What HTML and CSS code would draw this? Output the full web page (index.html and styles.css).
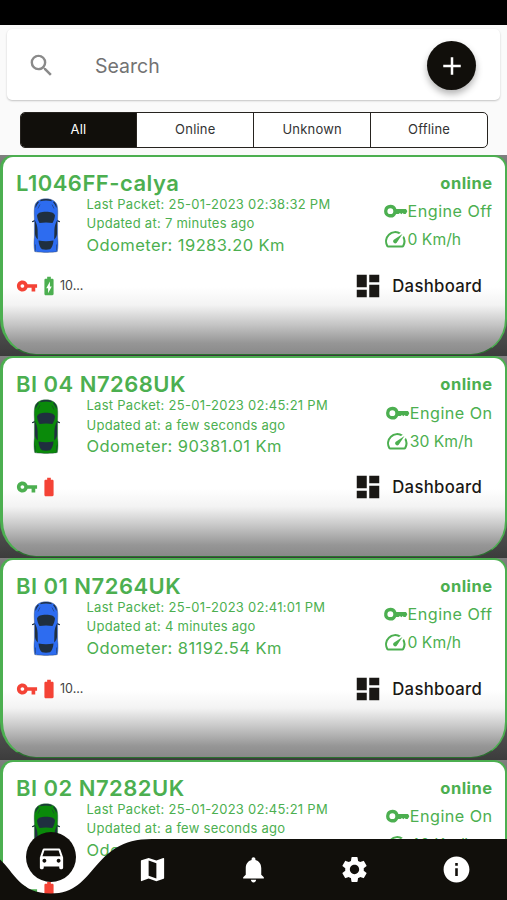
FILE: index.html
```html
<!DOCTYPE html>
<html lang="en">
<head>
    <meta charset="utf-8">
    <title>Vehicles</title>
    <link rel="stylesheet" href="styles.css">
</head>

<body>
<!-- shared icons -->
<svg class="sprite">
    <symbol id="search" viewBox="0 0 24 24">
        <path d="M15.5 14h-.79l-.28-.27A6.47 6.47 0 0 0 16 9.5 6.5 6.5 0 1 0 9.5 16c1.61 0 3.09-.59 4.23-1.57l.27.28v.79l5 4.99L20.49 19l-4.99-5zm-6 0C7.01 14 5 11.99 5 9.5S7.01 5 9.5 5 14 7.01 14 9.5 11.99 14 9.5 14z"/>
    </symbol>
    <symbol id="plus" viewBox="0 0 24 24">
        <path d="M19 13h-6v6h-2v-6H5v-2h6V5h2v6h6v2z"/>
    </symbol>
    <symbol id="key" viewBox="0 0 24 24">
        <path d="M12.65 10C11.83 7.67 9.61 6 7 6c-3.31 0-6 2.69-6 6s2.69 6 6 6c2.61 0 4.83-1.67 5.65-4H17v4h4v-4h2v-4H12.65zM7 14c-1.1 0-2-.9-2-2s.9-2 2-2 2 .9 2 2-.9 2-2 2z"/>
    </symbol>
    <symbol id="engine" viewBox="0 0 24 14">
        <path fill-rule="evenodd" d="M7.2.8a6.2 6.2 0 0 1 5.9 4h9.4L24 7l-1.800 2.700h-1.900l-1.100-.9-1.200 1.200-1.400-1.200-1.300.9h-2.400A6.2 6.2 0 1 1 7.2.8zM7.2 4.100a2.900 2.900 0 1 0 0 5.800 2.900 2.900 0 0 0 0-5.800z"/>
    </symbol>
    <symbol id="speed" viewBox="0 0 24 24">
        <path d="M20.38 8.57l-1.23 1.85a8 8 0 0 1-.22 7.58H5.07A8 8 0 0 1 15.58 6.85l1.85-1.23A10 10 0 0 0 3.35 19a2 2 0 0 0 1.72 1h13.85a2 2 0 0 0 1.74-1 10 10 0 0 0-.27-10.44zM10.59 15.41a2 2 0 0 0 2.83 0l5.66-8.49-8.49 5.66a2 2 0 0 0 0 2.83z"/>
    </symbol>
    <symbol id="battery" viewBox="0 0 24 24">
        <path d="M15.67 4H14V2h-4v2H8.33C7.6 4 7 4.6 7 5.33v15.33C7 21.4 7.6 22 8.33 22h7.33c.74 0 1.34-.6 1.34-1.33V5.33C17 4.6 16.4 4 15.67 4z"/>
    </symbol>
    <symbol id="charging" viewBox="0 0 24 24">
        <path d="M15.67 4H14V2h-4v2H8.33C7.6 4 7 4.6 7 5.33v15.33C7 21.4 7.6 22 8.33 22h7.33c.74 0 1.34-.6 1.34-1.33V5.33C17 4.6 16.4 4 15.67 4zM11 20v-5.5H9L13 7v5.5h2L11 20z"/>
    </symbol>
    <symbol id="dashboard" viewBox="0 0 24 24">
        <path d="M3 13h8V3H3v10zm0 8h8v-6H3v6zm10 0h8V11h-8v10zm0-18v6h8V3h-8z"/>
    </symbol>
    <symbol id="map" viewBox="0 0 24 24">
        <path d="M20.5 3l-.16.03L15 5.1 9 3 3.36 4.9c-.21.07-.36.25-.36.48V20.5c0 .28.22.5.5.5l.16-.03L9 18.9l6 2.1 5.64-1.9c.21-.07.36-.25.36-.48V3.5c0-.28-.22-.5-.5-.5zM15 19l-6-2.11V5l6 2.11V19z"/>
    </symbol>
    <symbol id="bell" viewBox="0 0 24 24">
        <path d="M12 22c1.1 0 2-.9 2-2h-4c0 1.1.89 2 2 2zm6-6v-5c0-3.07-1.64-5.64-4.5-6.32V4c0-.83-.67-1.5-1.5-1.5s-1.5.67-1.5 1.5v.68C7.63 5.36 6 7.92 6 11v5l-2 2v1h16v-1l-2-2z"/>
    </symbol>
    <symbol id="gear" viewBox="0 0 24 24">
        <path d="M19.14 12.94c.04-.3.06-.61.06-.94 0-.32-.02-.64-.07-.94l2.03-1.58a.49.49 0 0 0 .12-.61l-1.92-3.32a.488.488 0 0 0-.59-.22l-2.39.96c-.5-.38-1.03-.7-1.62-.94l-.36-2.54a.484.484 0 0 0-.48-.41h-3.84c-.24 0-.43.17-.47.41l-.36 2.54c-.59.24-1.13.57-1.62.94l-2.39-.96c-.22-.08-.47 0-.59.22L2.74 8.87c-.12.21-.08.47.12.61l2.03 1.58c-.05.3-.09.63-.09.94s.02.64.07.94l-2.03 1.58a.49.49 0 0 0-.12.61l1.92 3.32c.12.22.37.29.59.22l2.39-.96c.5.38 1.03.7 1.62.94l.36 2.54c.05.24.24.41.48.41h3.84c.24 0 .44-.17.47-.41l.36-2.54c.59-.24 1.13-.56 1.62-.94l2.39.96c.22.08.47 0 .59-.22l1.92-3.32c.12-.22.07-.47-.12-.61l-2.01-1.58zM12 15.6c-1.98 0-3.6-1.62-3.6-3.6s1.62-3.6 3.6-3.6 3.6 1.62 3.6 3.6-1.62 3.6-3.6 3.6z"/>
    </symbol>
    <symbol id="info" viewBox="0 0 24 24">
        <path d="M12 2C6.48 2 2 6.48 2 12s4.48 10 10 10 10-4.48 10-10S17.52 2 12 2zm1 15h-2v-6h2v6zm0-8h-2V7h2v2z"/>
    </symbol>
    <symbol id="car" viewBox="0 0 24 24">
        <path d="M18.92 6.01C18.72 5.42 18.16 5 17.5 5h-11c-.66 0-1.21.42-1.42 1.01L3 12v8c0 .55.45 1 1 1h1c.55 0 1-.45 1-1v-1h12v1c0 .55.45 1 1 1h1c.55 0 1-.45 1-1v-8l-2.08-5.99zM6.5 16c-.83 0-1.5-.67-1.5-1.5S5.67 13 6.5 13s1.5.67 1.5 1.5S7.33 16 6.5 16zm11 0c-.83 0-1.5-.67-1.5-1.5s.67-1.5 1.5-1.5 1.5.67 1.5 1.5-.67 1.5-1.5 1.5zM5 11l1.5-4.5h11L19 11H5z"/>
    </symbol>
    <!-- car seen from above, body takes the current colour -->
    <symbol id="topcar" viewBox="0 0 28 55">
        <path class="glass" d="M0 23.2l3-1.4v1.8l-3 .6zM28 23.2l-3-1.4v1.8l3 .6z"/>
        <path fill="currentColor" stroke="#26344a" stroke-opacity=".6" stroke-width=".6" d="M14 .8c6 0 9.5 2.400 11 6.200.9 3 .9 8 .6 13v19c.6 5 .6 10-.3 14.500-3 1.200-19.600 1.200-22.600 0-.9-4.500-.9-9.500-.3-14.500v-19c-.3-5-.3-10 .6-13C4.500 3.200 8 .8 14 .8z"/>
        <path class="glass" d="M9 1.700c3-1 7-1 10 0l1 1.500c-4-.9-8-.9-12 0zM3.400 8.500c.4-2.400 1.400-4 2.900-5l.5 1C5.300 6 4.400 8 3.700 10zM24.600 8.500c-.4-2.400-1.400-4-2.900-5l-.5 1c1.500 1.500 2.400 3.500 3.100 5.500z"/>
        <path class="glass" d="M5 17.500c1-2.800 4-3.700 9-3.700s8 .9 9 3.700c-.3 2.700-1.200 5.500-2.500 7.500-4-.8-9-.8-13 0C6.200 23 5.300 20.200 5 17.500z"/>
        <path class="glass" d="M3 22.500c1.600 3 2.500 6 2.600 9.500l.2 9.500C4.200 40 3.200 38 3 36zM25 22.500c-1.600 3-2.500 6-2.600 9.500l-.2 9.500c1.600-1.500 2.600-3.500 2.800-5.500z"/>
        <path class="glass" d="M6.500 42.500c4.500 1 10.500 1 15 0-.3 4.500-1.800 7.500-3.500 8.700-2.500.6-5.500.6-8 0-1.700-1.200-3.200-4.200-3.500-8.700z"/>
        <path class="crease" d="M8 6.500L6 10.500M20 6.500l2 4M3.500 46.500v6M24.500 46.500v6"/>
    </symbol>
</svg>

<div class="statusbar"></div>

<header class="top">
    <div class="search">
        <svg class="search-icon"><use href="#search"/></svg>
        <span class="search-text">Search</span>
        <div class="add"><svg><use href="#plus"/></svg></div>
    </div>
    <div class="tabs">
        <div class="tab active">All</div>
        <div class="tab">Online</div>
        <div class="tab">Unknown</div>
        <div class="tab">Offline</div>
    </div>
</header>

<main class="list">
    <div class="slot">
        <div class="card">
            <div class="details">
                <div class="left">
                    <h2>L1046FF-calya</h2>
                    <div class="vehicle">
                        <svg class="topcar blue"><use href="#topcar"/></svg>
                        <div>
                            <p>Last Packet: 25-01-2023 02:38:32 PM</p>
                            <p>Updated at: 7 minutes ago</p>
                            <p class="odometer">Odometer: 19283.20 Km</p>
                        </div>
                    </div>
                </div>
                <div class="right">
                    <b>online</b>
                    <div class="stats">
                        <div class="stat"><svg class="engine"><use href="#engine"/></svg>Engine Off</div>
                        <div class="stat kmh"><svg class="speed"><use href="#speed"/></svg>0 Km/h</div>
                    </div>
                </div>
            </div>
            <div class="actions">
                <svg class="small red"><use href="#key"/></svg>
                <svg class="small"><use href="#charging"/></svg>
                <span class="level">10...</span>
                <div class="dash"><svg><use href="#dashboard"/></svg>Dashboard</div>
            </div>
        </div>
    </div>

    <div class="slot">
        <div class="card">
            <div class="details">
                <div class="left">
                    <h2>BI 04 N7268UK</h2>
                    <div class="vehicle">
                        <svg class="topcar green"><use href="#topcar"/></svg>
                        <div>
                            <p>Last Packet: 25-01-2023 02:45:21 PM</p>
                            <p>Updated at: a few seconds ago</p>
                            <p class="odometer">Odometer: 90381.01 Km</p>
                        </div>
                    </div>
                </div>
                <div class="right">
                    <b>online</b>
                    <div class="stats">
                        <div class="stat"><svg class="engine"><use href="#engine"/></svg>Engine On</div>
                        <div class="stat kmh"><svg class="speed"><use href="#speed"/></svg>30 Km/h</div>
                    </div>
                </div>
            </div>
            <div class="actions">
                <svg class="small"><use href="#key"/></svg>
                <svg class="small red"><use href="#battery"/></svg>
                <div class="dash"><svg><use href="#dashboard"/></svg>Dashboard</div>
            </div>
        </div>
    </div>

    <div class="slot">
        <div class="card">
            <div class="details">
                <div class="left">
                    <h2>BI 01 N7264UK</h2>
                    <div class="vehicle">
                        <svg class="topcar blue"><use href="#topcar"/></svg>
                        <div>
                            <p>Last Packet: 25-01-2023 02:41:01 PM</p>
                            <p>Updated at: 4 minutes ago</p>
                            <p class="odometer">Odometer: 81192.54 Km</p>
                        </div>
                    </div>
                </div>
                <div class="right">
                    <b>online</b>
                    <div class="stats">
                        <div class="stat"><svg class="engine"><use href="#engine"/></svg>Engine Off</div>
                        <div class="stat kmh"><svg class="speed"><use href="#speed"/></svg>0 Km/h</div>
                    </div>
                </div>
            </div>
            <div class="actions">
                <svg class="small red"><use href="#key"/></svg>
                <svg class="small red"><use href="#battery"/></svg>
                <span class="level">10...</span>
                <div class="dash"><svg><use href="#dashboard"/></svg>Dashboard</div>
            </div>
        </div>
    </div>

    <div class="slot">
        <div class="card">
            <div class="details">
                <div class="left">
                    <h2>BI 02 N7282UK</h2>
                    <div class="vehicle">
                        <svg class="topcar green"><use href="#topcar"/></svg>
                        <div>
                            <p>Last Packet: 25-01-2023 02:45:21 PM</p>
                            <p>Updated at: a few seconds ago</p>
                            <p class="odometer">Odo</p>
                        </div>
                    </div>
                </div>
                <div class="right">
                    <b>online</b>
                    <div class="stats">
                        <div class="stat"><svg class="engine"><use href="#engine"/></svg>Engine On</div>
                        <div class="stat kmh"><svg class="speed"><use href="#speed"/></svg>40 Km/h</div>
                    </div>
                </div>
            </div>
            <div class="actions">
                <svg class="small"><use href="#key"/></svg>
                <svg class="small red"><use href="#battery"/></svg>
            </div>
        </div>
    </div>
</main>

<nav class="nav">
    <svg class="nav-shape" viewBox="0 0 507 61">
        <path d="M0 20.500C14 33 20 54.500 51 54.500C98 54.500 90 0 152 0H507V61H0z"/>
    </svg>
    <div class="nav-items">
        <div class="nav-item current"><span><svg><use href="#car"/></svg></span></div>
        <div class="nav-item"><svg><use href="#map"/></svg></div>
        <div class="nav-item"><svg><use href="#bell"/></svg></div>
        <div class="nav-item"><svg><use href="#gear"/></svg></div>
        <div class="nav-item"><svg><use href="#info"/></svg></div>
    </div>
</nav>
</body>
</html>
```
FILE: styles.css
```css
* {
    box-sizing: border-box;
}

body {
    margin: 0;
    height: 900px;
    display: flex;
    flex-direction: column;
    position: relative;
    overflow: hidden;
    background: #fafafa;
    font-family: Inter, "Liberation Sans", sans-serif;
    color: #4caf50;
}

svg {
    display: block;
    flex: none;
    fill: currentColor;
}

h2, p {
    margin: 0;
}

.sprite {
    position: absolute;
    width: 0;
    height: 0;
}

.statusbar {
    height: 25px;
    flex: none;
    background: #000;
}

/* search and filter */
.top {
    height: 129.5px;
    flex: none;
    padding: 4px 7px 0;
}

.search {
    height: 71px;
    display: flex;
    align-items: center;
    padding: 2px 24px 0 19.5px;
    background: #fff;
    border-radius: 5px;
    box-shadow: 0 1px 2px rgba(0, 0, 0, .22);
}

.search-icon {
    width: 29px;
    height: 29px;
    color: #8a8a8a;
}

.search-text {
    flex: 1;
    margin-left: 39.5px;
    font-size: 19.5px;
    color: #737373;
}

.add {
    display: flex;
    align-items: center;
    justify-content: center;
    width: 49px;
    height: 49px;
    border-radius: 50%;
    background: #110f0b;
    color: #fff;
    box-shadow: 0 4px 7px rgba(0, 0, 0, .3);
}

.add svg {
    width: 30px;
    height: 30px;
}

.tabs {
    display: flex;
    height: 35.5px;
    margin: 12.4px 12px 0 12.5px;
    border: 1.5px solid #26231f;
    border-radius: 5px;
    background: #fff;
    overflow: hidden;
}

.tab {
    flex: 1;
    line-height: 33px;
    text-align: center;
    font-size: 13px;
    letter-spacing: .2px;
    color: #333;
}

.tab + .tab {
    border-left: 1px solid #26231f;
}

.tab.active {
    background: #110f0b;
    color: #fff;
}

/* vehicle cards */
.list {
    flex: 1;
    min-height: 0;
    overflow: hidden;
}

.slot {
    height: 201.7px;
    background: linear-gradient(#808080, #777 10px, #666 70%, #3c3c3c);
}

.card {
    height: 200.4px;
    border: solid #4caf50;
    border-width: 2.5px 2.5px 1.5px 3.5px;
    border-bottom-color: #2b722f;
    border-radius: 13px 13px 36px 36px;
    padding: 13px 12.5px 0 13px;
    background: linear-gradient(#fff 66%, #f3f3f3 75%, #c4c4c4 85%, #969696 94%, #888) border-box;
}

.details {
    display: flex;
    justify-content: space-between;
    height: 99px;
}

h2 {
    font-size: 22px;
    line-height: 26px;
    height: 25px;
    font-weight: 600;
    letter-spacing: .48px;
}

.vehicle {
    display: flex;
    gap: 27px;
}

.topcar {
    width: 28px;
    height: 55px;
    margin: 3px 0 0 15.5px;
}

.topcar.blue {
    color: #2d6cf0;
}

.topcar.green {
    color: #0a8a0a;
}

.glass {
    fill: #1f2f3f;
}

.crease {
    fill: none;
    stroke: #1f2f3f;
    stroke-opacity: .5;
}

p {
    font-size: 13px;
    line-height: 19.6px;
    letter-spacing: .27px;
    white-space: nowrap;
}

.odometer {
    font-size: 16.5px;
    line-height: 23px;
    letter-spacing: .42px;
}

.right {
    display: flex;
    flex-direction: column;
    align-items: flex-end;
    font-size: 16.2px;
    letter-spacing: .45px;
}

.right b {
    height: 27.4px;
    line-height: 26px;
    font-size: 16.5px;
}

.stat {
    display: flex;
    align-items: center;
    height: 28.3px;
}

.kmh {
    font-size: 15.7px;
    letter-spacing: 0;
}

.engine {
    width: 24.5px;
    height: 14.3px;
}

.speed {
    width: 24.5px;
    height: 24.5px;
}

.actions {
    display: flex;
    align-items: center;
    height: 34px;
}

.small {
    width: 22px;
    height: 22px;
}

.red {
    color: #f44336;
}

.level {
    font-size: 12.5px;
    color: #444;
}

.dash {
    display: flex;
    align-items: center;
    gap: 9.5px;
    margin-left: auto;
    margin-right: 10.5px;
    font-size: 16.7px;
    font-weight: 500;
    letter-spacing: .3px;
    color: #1a1815;
}

.dash svg {
    width: 30px;
    height: 30px;
}

/* bottom bar, lies over the list */
.nav {
    position: absolute;
    left: 0;
    bottom: 0;
    width: 507px;
    height: 61px;
    color: #fff;
}

.nav-shape {
    position: absolute;
    width: 507px;
    height: 61px;
    color: #110f0b;
}

.nav-items {
    position: relative;
    display: flex;
    height: 61px;
}

.nav-item {
    flex: 1;
    display: flex;
    align-items: center;
    justify-content: center;
}

.nav-item svg {
    width: 31px;
    height: 31px;
}

.current {
    align-items: flex-start;
}

.current span {
    display: flex;
    align-items: center;
    justify-content: center;
    width: 50px;
    height: 50px;
    margin: -7px 0 0 1px;
    border-radius: 50%;
    background: #110f0b;
}
```
